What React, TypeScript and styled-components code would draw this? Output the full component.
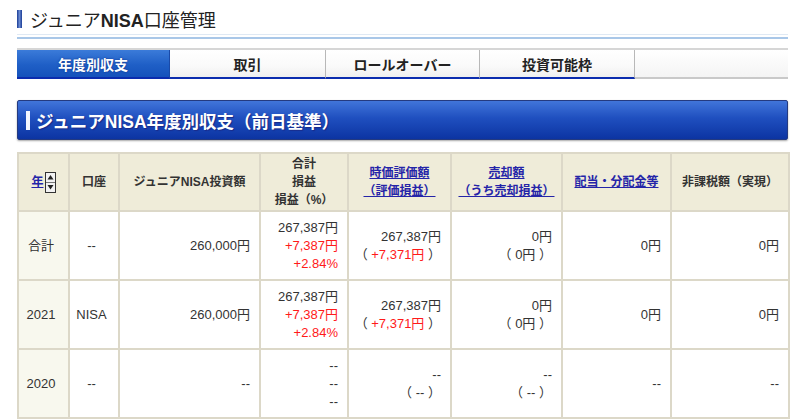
import React from "react";
import styled, { createGlobalStyle } from "styled-components";

const Global = createGlobalStyle`
  html, body { margin: 0; padding: 0; background: #fff; }
  body { font-family: "Liberation Sans", "Noto Sans CJK JP", sans-serif; color: #333; }
`;

const Page = styled.div`
  width: 771px;
  padding: 8px 0 0 17px;
`;

const PageTitle = styled.h1`
  display: flex;
  align-items: center;
  gap: 8px;
  margin: 0;
  height: 22px;
  font-size: 18px;
  font-weight: normal;
  color: #222;
  b { font-weight: bold; }
`;

const TitleMark = styled.span`
  width: 5px;
  height: 18px;
  background: linear-gradient(90deg, #1a3c96 0%, #6a8ad0 50%, #1a3c96 100%);
`;

const DoubleRule = styled.div`
  margin-top: 4px;
  height: 2px;
  border-top: 1px solid #dfe9f4;
  border-bottom: 2px solid #a9c7e8;
`;

const Tabs = styled.div`
  display: flex;
  margin-top: 9px;
  height: 29px;
  border-top: 2px solid #d6d6d6;
`;

const Tab = styled.div<{ $active?: boolean; $w: number }>`
  width: ${(p) => p.$w}px;
  box-sizing: border-box;
  display: flex;
  align-items: center;
  justify-content: center;
  font-size: 14px;
  font-weight: bold;
  color: ${(p) => (p.$active ? "#fff" : "#222")};
  background: ${(p) =>
    p.$active
      ? "linear-gradient(180deg, #3b7bd9 0%, #1f5fc6 55%, #1552bb 100%)"
      : "linear-gradient(180deg, #ffffff 0%, #fafafa 60%, #efefef 100%)"};
  border-right: 1px solid ${(p) => (p.$active ? "#1a4aa8" : "#b8b8b8")};
  border-bottom: 2px solid #0b2cae;
  text-shadow: ${(p) => (p.$active ? "0 0 2px #0a2a80" : "none")};
`;

const TabFill = styled.div`
  flex: 1;
  border-bottom: 2px solid #c9c9c9;
  background: linear-gradient(180deg, #ffffff 0%, #f4f4f4 100%);
`;

const SectionBar = styled.div`
  margin-top: 21px;
  height: 40px;
  box-sizing: border-box;
  display: flex;
  align-items: center;
  gap: 6px;
  padding-left: 8px;
  border: 1px solid #243a80;
  border-radius: 2px;
  background: linear-gradient(180deg, #4175da 0%, #1f4fbf 45%, #0c34a2 100%);
  box-shadow: 0 1px 2px rgba(0, 0, 0, 0.35);
  color: #fff;
  font-size: 17.5px;
  font-weight: bold;
  text-shadow: 1px 1px 1px #1a2a88;
`;

const SectionMark = styled.span`
  width: 4px;
  height: 19px;
  background: #f4f6ff;
`;

const Table = styled.table`
  margin-top: 12px;
  width: 771px;
  border-collapse: collapse;
  table-layout: fixed;
  font-size: 13px;
  line-height: 18px;
`;

const Th = styled.th`
  background: #efecd9;
  border: 2px solid #dcd8c8;
  font-size: 12px;
  font-weight: bold;
  color: #333;
  height: 56px;
  padding: 0 2px;
  text-align: center;
  vertical-align: middle;
  a { color: #2424a8; text-decoration: underline; }
`;

const Td = styled.td<{ $align?: "left" | "center" | "right"; $first?: boolean }>`
  border: 2px solid #dcd8c8;
  height: 67px;
  padding: 0 9px 0 4px;
  text-align: ${(p) => p.$align || "right"};
  vertical-align: middle;
  background: ${(p) => (p.$first ? "#f8f8ee" : "#fff")};
  color: #333;
`;

const Red = styled.span`
  color: #ff1a1a;
`;

const Line = styled.div``;

const YearHead = styled.span`
  display: inline-flex;
  align-items: center;
  gap: 1px;
`;

const SortIcon = () => (
  <svg width="11" height="21" viewBox="0 0 11 21">
    <rect x="0.5" y="0.5" width="10" height="20" fill="#f2f2f2" stroke="#333" />
    <line x1="1" y1="10.5" x2="10" y2="10.5" stroke="#777" />
    <polygon points="5.5,3 8.5,7.5 2.5,7.5" fill="#222" />
    <polygon points="5.5,17.5 8.5,13 2.5,13" fill="#222" />
  </svg>
);

type Row = {
  year: string;
  acct: string;
  invest: string;
  total: [string, string, string];
  totalRed: boolean;
  value: [string, string];
  sale: [string, string];
  div: string;
  tax: string;
};

const rows: Row[] = [
  {
    year: "合計",
    acct: "--",
    invest: "260,000円",
    total: ["267,387円", "+7,387円", "+2.84%"],
    totalRed: true,
    value: ["267,387円", "+7,371円"],
    sale: ["0円", "0円"],
    div: "0円",
    tax: "0円",
  },
  {
    year: "2021",
    acct: "NISA",
    invest: "260,000円",
    total: ["267,387円", "+7,387円", "+2.84%"],
    totalRed: true,
    value: ["267,387円", "+7,371円"],
    sale: ["0円", "0円"],
    div: "0円",
    tax: "0円",
  },
  {
    year: "2020",
    acct: "--",
    invest: "--",
    total: ["--", "--", "--"],
    totalRed: false,
    value: ["--", "--"],
    sale: ["--", "--"],
    div: "--",
    tax: "--",
  },
];

const widths = [51, 50, 141, 88, 103, 111, 109, 118];

export default function App() {
  return (
    <>
      <Global />
      <Page>
        <PageTitle>
          <TitleMark />
          <span>
            ジュニア<b>NISA</b>口座管理
          </span>
        </PageTitle>
        <DoubleRule />
        <Tabs>
          <Tab $active $w={153}>年度別収支</Tab>
          <Tab $w={156}>取引</Tab>
          <Tab $w={154}>ロールオーバー</Tab>
          <Tab $w={155}>投資可能枠</Tab>
          <TabFill />
        </Tabs>
        <SectionBar>
          <SectionMark />
          <span>ジュニアNISA年度別収支（前日基準）</span>
        </SectionBar>
        <Table>
          <colgroup>
            {widths.map((w, i) => (
              <col key={i} style={{ width: w }} />
            ))}
          </colgroup>
          <thead>
            <tr>
              <Th>
                <YearHead>
                  <a href="#">年</a>
                  <SortIcon />
                </YearHead>
              </Th>
              <Th>口座</Th>
              <Th>ジュニアNISA投資額</Th>
              <Th>
                合計
                <br />
                損益
                <br />
                損益（%）
              </Th>
              <Th>
                <a href="#">
                  時価評価額
                  <br />
                  （評価損益）
                </a>
              </Th>
              <Th>
                <a href="#">
                  売却額
                  <br />
                  （うち売却損益）
                </a>
              </Th>
              <Th>
                <a href="#">配当・分配金等</a>
              </Th>
              <Th>非課税額（実現）</Th>
            </tr>
          </thead>
          <tbody>
            {rows.map((r) => (
              <tr key={r.year}>
                <Td $align="center" $first>{r.year}</Td>
                <Td $align="center">{r.acct}</Td>
                <Td>{r.invest}</Td>
                <Td>
                  <Line>{r.total[0]}</Line>
                  <Line>{r.totalRed ? <Red>{r.total[1]}</Red> : r.total[1]}</Line>
                  <Line>{r.totalRed ? <Red>{r.total[2]}</Red> : r.total[2]}</Line>
                </Td>
                <Td>
                  <Line>{r.value[0]}</Line>
                  <Line>
                    （ {r.totalRed ? <Red>{r.value[1]}</Red> : r.value[1]} ）
                  </Line>
                </Td>
                <Td>
                  <Line>{r.sale[0]}</Line>
                  <Line>（ {r.sale[1]} ）</Line>
                </Td>
                <Td>{r.div}</Td>
                <Td>{r.tax}</Td>
              </tr>
            ))}
          </tbody>
        </Table>
      </Page>
    </>
  );
}
